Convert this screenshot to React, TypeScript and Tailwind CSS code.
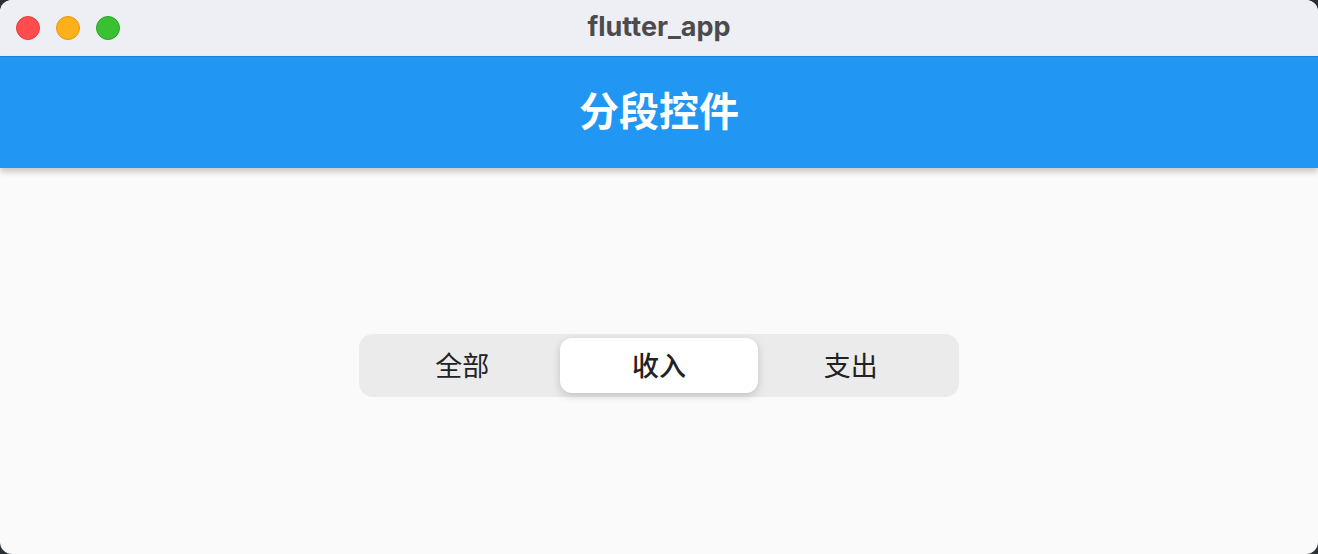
import { useState } from "react";

const segments = [
  { label: "全部", shift: "translate-x-[3px]" },
  { label: "收入", shift: "" },
  { label: "支出", shift: "-translate-x-[8px]" },
];

const cjk = { fontFamily: '"Noto Sans CJK SC", "Noto Sans", sans-serif' };

export default function App() {
  const [active, setActive] = useState(1);

  return (
    <div className="h-[554px] w-[1318px] overflow-hidden bg-[#2b2f36]">
      <div className="flex h-full flex-col overflow-hidden rounded-[12px] bg-[#fafafa]">
        {/* Window title bar */}
        <div className="relative flex h-[56px] shrink-0 items-center justify-center bg-[#eeeff4]">
          <div className="absolute left-[16px] top-[16px] flex gap-[16px]">
            <span className="h-[24px] w-[24px] rounded-full border border-[#e2403f] bg-[#fe4c4f]" />
            <span className="h-[24px] w-[24px] rounded-full border border-[#e09a12] bg-[#feb01a]" />
            <span className="h-[24px] w-[24px] rounded-full border border-[#2aa526] bg-[#38c131]" />
          </div>
          <span
            className="-mt-[2px] text-[27px] font-bold text-[#4b4b4d]"
            style={{ fontFamily: '"Inter", "Liberation Sans", sans-serif' }}
          >
            flutter_app
          </span>
        </div>

        {/* App bar */}
        <header className="z-10 flex h-[112px] shrink-0 items-center justify-center border-t border-[#1a7fd6] bg-[#2196f3] pb-[8px] shadow-[0_4px_6px_rgba(0,0,0,0.2)]">
          <h1 className="text-[40px] font-bold text-white" style={cjk}>
            分段控件
          </h1>
        </header>

        {/* Body */}
        <main className="flex flex-1 items-center justify-center pt-[9px]">
          <div className="flex h-[63px] w-[600px] rounded-[14px] bg-[#ebebeb] p-[4px_1px]">
            {segments.map(({ label, shift }, i) => (
              <button
                key={label}
                type="button"
                onClick={() => setActive(i)}
                className={`flex flex-1 items-center justify-center rounded-[12px] text-[27px] text-[#222] ${
                  active === i
                    ? "mx-[1px] bg-white font-medium shadow-[0_3px_8px_rgba(0,0,0,0.18)]"
                    : ""
                }`}
                style={cjk}
              >
                <span className={shift}>{label}</span>
              </button>
            ))}
          </div>
        </main>
      </div>
    </div>
  );
}
